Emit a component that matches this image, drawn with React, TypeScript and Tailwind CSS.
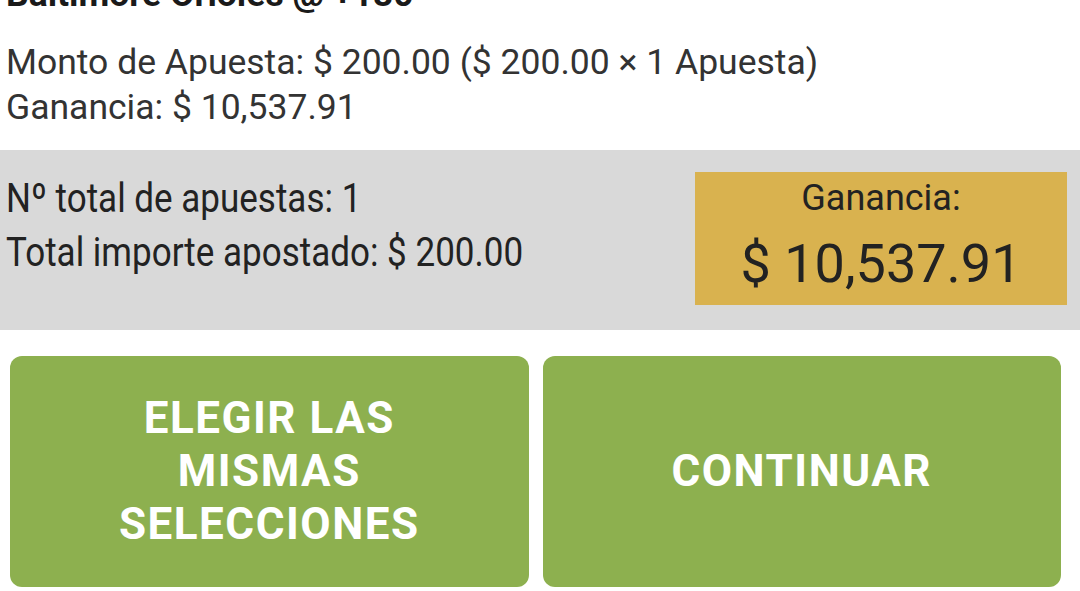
export default function App() {
  return (
    <div className="w-[1080px] h-[591px] overflow-hidden bg-white text-[#222] font-['Roboto','Liberation_Sans',sans-serif]">
      {/* selection summary */}
      <div className="px-[6px]">
        <p className="mt-[-26px] text-[35.5px] leading-[40px] font-bold text-[#1a1a1a]">Baltimore Orioles @ +180</p>
        <div className="mt-[26px] text-[35.5px] leading-[45px] text-[#333]">
          <p>Monto de Apuesta: $ 200.00 ($ 200.00 × 1 Apuesta)</p>
          <p>Ganancia: $ 10,537.91</p>
        </div>
      </div>

      {/* totals */}
      <div className="mt-[20px] h-[180px] bg-[#d9d9d9] flex items-start justify-between pt-[22px] pl-[6px] pr-[13px]">
        <div className="text-[35px] leading-[54px] text-[#222]">
          <p className="scale-y-[1.15]">Nº total de apuestas: 1</p>
          <p className="scale-y-[1.15]">Total importe apostado: $ 200.00</p>
        </div>
        <div className="w-[372px] h-[133px] bg-[#d9b24f] flex flex-col items-center pt-[4px] text-[#222]">
          <span className="text-[36px] leading-[44px]">Ganancia:</span>
          <span className="mt-[12px] text-[54px] leading-[64px]">$ 10,537.91</span>
        </div>
      </div>

      {/* actions */}
      <div className="mt-[26px] pl-[10px] pr-[19px] flex gap-[14px]">
        <button className="flex-1 h-[231px] rounded-[12px] bg-[#8db04f] text-white font-bold text-[44px] leading-[53px] tracking-[1.5px] uppercase">
          Elegir las
          <br />
          mismas
          <br />
          selecciones
        </button>
        <button className="flex-1 h-[231px] rounded-[12px] bg-[#8db04f] text-white font-bold text-[44px] leading-[53px] tracking-[1.5px] uppercase">
          Continuar
        </button>
      </div>
    </div>
  )
}
